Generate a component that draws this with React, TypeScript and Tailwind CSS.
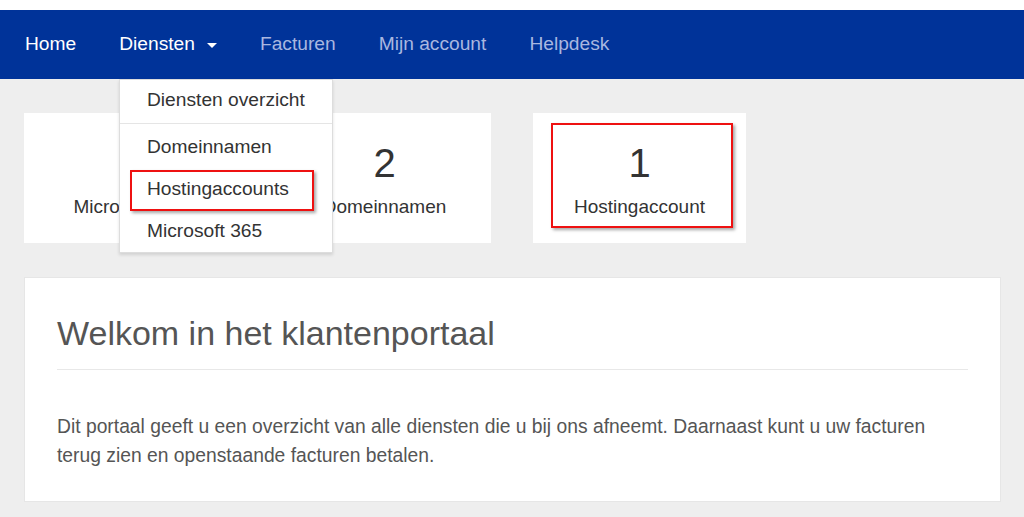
import React from "react";

const font = { fontFamily: '"Liberation Sans", Arial, sans-serif' };

function StatCard({ count, label }: { count: string; label: string }) {
  return (
    <div className="w-[213px] h-[130px] bg-white flex flex-col items-center text-[#333]">
      <div className="mt-[26px] text-[40px] leading-[48px]">{count}</div>
      <div className="mt-[8px] text-[19px] leading-[24px]">{label}</div>
    </div>
  );
}

export default function App() {
  return (
    <div className="min-h-[517px] bg-[#eeeeee] relative" style={font}>
      <div className="h-[10px] bg-white" />

      {/* Navbar */}
      <nav className="h-[69px] bg-[#003399] flex items-center pl-[25px] gap-[43px] text-[19.2px]">
        <a className="text-white" href="#">Home</a>
        <div className="relative">
          <a className="text-white flex items-center" href="#">
            Diensten
            <span className="ml-[12px] mt-[2px] w-0 h-0 border-l-[5px] border-r-[5px] border-t-[5px] border-l-transparent border-r-transparent border-t-white" />
          </a>
        </div>
        <a className="text-[#a9b7e0]" href="#">Facturen</a>
        <a className="text-[#a9b7e0]" href="#">Mijn account</a>
        <a className="text-[#a9b7e0]" href="#">Helpdesk</a>
      </nav>

      {/* Stat cards */}
      <main className="px-[24px] pt-[34px]">
        <div className="flex gap-[41px]">
          <StatCard count="1" label="Microsoft 365" />
          <StatCard count="2" label="Domeinnamen" />
          <div className="ml-[1px] relative">
            <StatCard count="1" label="Hostingaccount" />
            <div className="absolute left-[18px] top-[10px] w-[182px] h-[105px] border-2 border-[#ee1111] shadow-[2px_2px_3px_rgba(0,0,0,0.35)]" />
          </div>
        </div>

        {/* Welcome panel */}
        <section className="mt-[34px] w-[977px] h-[225px] bg-white border border-[#e6e6e6] px-[32px] text-[#555]">
          <h1 className="pt-[33px] pb-[14px] text-[34px] leading-[44px] font-light text-[#555] border-b border-[#e8e8e8]">
            Welkom in het klantenportaal
          </h1>
          <p className="mt-[42px] text-[19.3px] leading-[29px]">
            Dit portaal geeft u een overzicht van alle diensten die u bij ons afneemt. Daarnaast kunt u uw facturen
            terug zien en openstaande facturen betalen.
          </p>
        </section>
      </main>

      {/* Dropdown menu */}
      <div className="absolute left-[119px] top-[79px] w-[214px] bg-white border border-[#dddddd] shadow-[0_2px_3px_rgba(0,0,0,0.12)] text-[19.2px] text-[#333]">
        <div className="h-[41px] flex items-center pl-[27px]">Diensten overzicht</div>
        <div className="my-[2px] h-px bg-[#e5e5e5]" />
        <div className="h-[42px] flex items-center pl-[27px]">Domeinnamen</div>
        <div className="h-[42px] flex items-center pl-[27px] relative">
          Hostingaccounts
          <div className="absolute left-[10px] top-[2px] w-[184px] h-[41px] border-2 border-[#ee1111] shadow-[2px_2px_3px_rgba(0,0,0,0.35)]" />
        </div>
        <div className="h-[42px] flex items-center pl-[27px]">Microsoft 365</div>
      </div>
    </div>
  );
}
